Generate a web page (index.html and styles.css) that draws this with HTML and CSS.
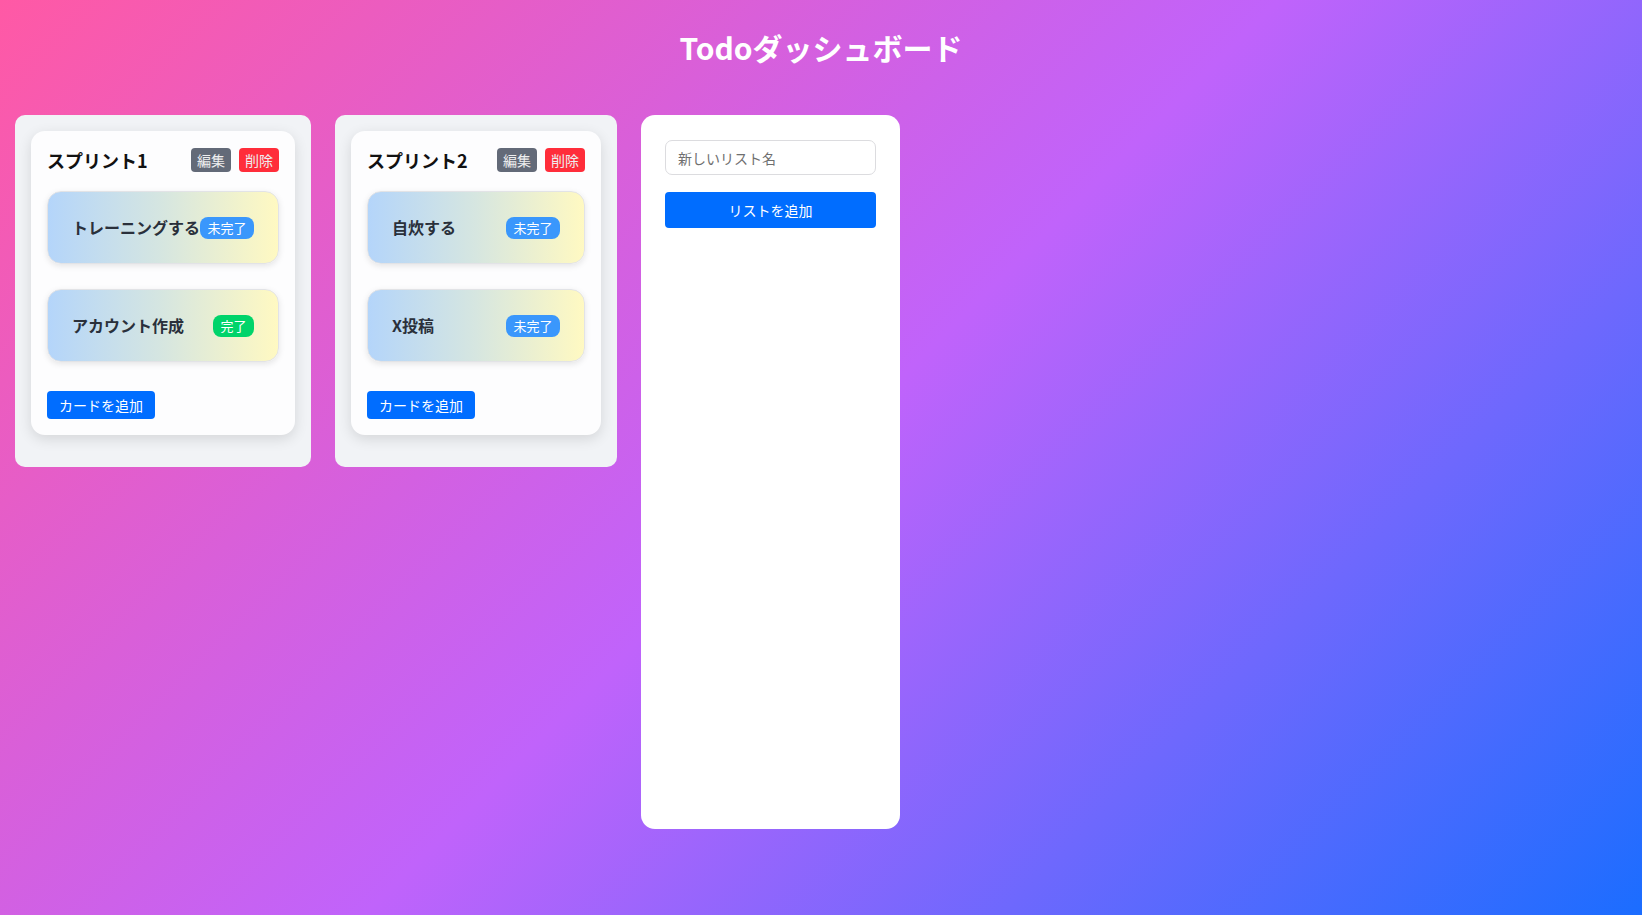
FILE: index.html
```html
<!DOCTYPE html>
<html lang="ja">
<head>
<meta charset="utf-8">
<title>Todoダッシュボード</title>
<link rel="stylesheet" href="styles.css">
</head>
<body>
<div class="page">
  <h1 class="page-title">Todoダッシュボード</h1>
  <div class="board">
    <section class="list">
      <div class="list-inner">
        <div class="list-header">
          <h2 class="list-title">スプリント1</h2>
          <div class="btn-group">
            <button class="btn btn-edit">編集</button>
            <button class="btn btn-delete">削除</button>
          </div>
        </div>
        <div class="tasks">
          <div class="task">
            <span class="task-title">トレーニングする</span>
            <span class="badge badge-todo">未完了</span>
          </div>
          <div class="task">
            <span class="task-title">アカウント作成</span>
            <span class="badge badge-done">完了</span>
          </div>
        </div>
        <button class="btn-add">カードを追加</button>
      </div>
    </section>
    <section class="list">
      <div class="list-inner">
        <div class="list-header">
          <h2 class="list-title">スプリント2</h2>
          <div class="btn-group">
            <button class="btn btn-edit">編集</button>
            <button class="btn btn-delete">削除</button>
          </div>
        </div>
        <div class="tasks">
          <div class="task">
            <span class="task-title">自炊する</span>
            <span class="badge badge-todo">未完了</span>
          </div>
          <div class="task">
            <span class="task-title">X投稿</span>
            <span class="badge badge-todo">未完了</span>
          </div>
        </div>
        <button class="btn-add">カードを追加</button>
      </div>
    </section>
    <section class="new-list">
      <input class="new-list-input" type="text" placeholder="新しいリスト名">
      <button class="btn-add-list">リストを追加</button>
    </section>
  </div>
</div>
</body>
</html>
```
FILE: styles.css
```css
html, body {
  margin: 0;
  padding: 0;
  min-height: 100%;
}
html {
  height: 100%;
}
body {
  min-height: 100vh;
  background: linear-gradient(135deg, #ff59a5 0%, #c063fb 50%, #1b6dff 100%);
  font-family: "Noto Sans CJK JP", "Noto Sans", sans-serif;
}
.page {
  padding: 15px;
}
.page-title {
  margin: 14px 0 50px;
  text-align: center;
  color: #ffffff;
  font-size: 30px;
  line-height: 36px;
  font-weight: 700;
}
.board {
  display: flex;
  align-items: flex-start;
  gap: 24px;
}
.list {
  background: #f1f3f6;
  border-radius: 10px;
  padding: 16px 16px 32px;
}
.list-inner {
  box-sizing: border-box;
  min-width: 250px;
  background: #fdfdfe;
  border-radius: 14px;
  padding: 15px 16px 16px;
  box-shadow: 0 4px 14px rgba(0, 0, 0, 0.12);
}
.list-header {
  display: flex;
  justify-content: space-between;
  align-items: center;
  gap: 12px;
  height: 28px;
  margin-bottom: 17px;
}
.list-title {
  margin: 0;
  font-size: 18px;
  line-height: 26px;
  font-weight: 700;
  color: #111111;
}
.btn-group {
  display: flex;
  gap: 8px;
}
.btn {
  height: 24px;
  padding: 0 6px;
  border: none;
  border-radius: 4px;
  font-family: inherit;
  font-size: 14px;
  line-height: 24px;
  color: #eeeeef;
}
.btn-edit {
  background: #636a78;
}
.btn-delete {
  background: #ff2d3a;
}
.tasks {
  display: flex;
  flex-direction: column;
  gap: 25px;
  margin-bottom: 29px;
}
.task {
  display: flex;
  justify-content: space-between;
  align-items: center;
  padding: 24px;
  border: 1px solid #e2e3e6;
  border-radius: 14px;
  background: linear-gradient(90deg, #b4d5fa 0%, #d6e6e0 50%, #fff9c2 100%);
  box-shadow: 0 2px 6px rgba(0, 0, 0, 0.1);
}
.task-title {
  font-size: 16px;
  line-height: 23px;
  font-weight: 700;
  color: #2a303b;
  white-space: nowrap;
}
.badge {
  height: 22px;
  padding: 0 7.5px;
  border-radius: 8px;
  font-size: 13px;
  line-height: 22px;
  color: #ffffff;
  white-space: nowrap;
}
.badge-todo {
  background: #3a97fc;
}
.badge-done {
  background: #00d46a;
}
.btn-add {
  display: block;
  height: 28px;
  padding: 0 12px;
  border: none;
  border-radius: 4px;
  background: #006dff;
  font-family: inherit;
  font-size: 14px;
  line-height: 28px;
  color: #ffffff;
}
.new-list {
  box-sizing: border-box;
  width: 259px;
  height: 714px;
  background: #ffffff;
  border-radius: 14px;
  padding: 25px 24px;
}
.new-list-input {
  box-sizing: border-box;
  display: block;
  width: 100%;
  height: 35px;
  padding: 0 12px;
  border: 1px solid #dcdcdf;
  border-radius: 7px;
  font-family: inherit;
  font-size: 14px;
  color: #333333;
  outline: none;
}
.new-list-input::placeholder {
  color: #6f6f6f;
}
.btn-add-list {
  display: block;
  width: 100%;
  height: 36px;
  margin-top: 17px;
  border: none;
  border-radius: 4px;
  background: #006dff;
  font-family: inherit;
  font-size: 14px;
  color: #ffffff;
}
```
